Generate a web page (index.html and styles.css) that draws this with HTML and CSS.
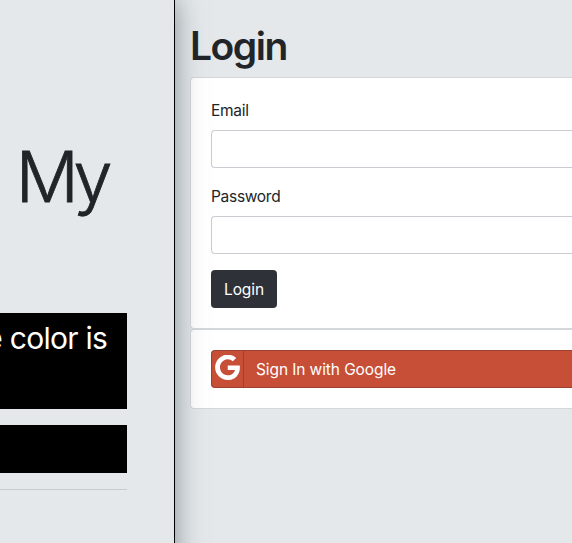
FILE: index.html
```html
<!DOCTYPE html>
<html lang="en">
<head>
<meta charset="utf-8">
<title>Login</title>
<link rel="stylesheet" href="styles.css">
</head>
<body>
<div class="page">
  <aside class="intro">
    <h1 class="display">My</h1>
    <p class="banner"><span>e color is</span></p>
    <div class="bar"></div>
    <hr class="rule">
  </aside>
  <main class="login">
    <h2 class="title">Login</h2>
    <form class="card form">
      <label class="label" for="email">Email</label>
      <input class="field" id="email" type="email">
      <label class="label" for="password">Password</label>
      <input class="field" id="password" type="password">
      <button class="submit" type="button"><span>Login</span></button>
    </form>
    <section class="card social">
      <a class="google" href="#">
        <span class="logo"><svg viewBox="0 106 1505 1518" width="25" height="25"><path fill="#fff" d="M768 750h725q12 67 12 124 0 217-91 387.500t-259.500 266.500-386.500 96q-157 0-299-60.500t-245-163.500-163.500-245-60.500-299 60.500-299 163.500-245 245-163.500 299-60.500q300 0 515 201l-209 201q-123-119-306-119-129 0-238.500 65t-173.500 176.500-64 243.500 64 243.500 173.500 176.500 238.500 65q87 0 160-24t120-60 82-82 51.500-87 22.500-78h-436v-264z"/></svg></span>
        <span class="google-text">Sign In with Google</span>
      </a>
    </section>
  </main>
</div>
</body>
</html>
```
FILE: styles.css
```css
* { box-sizing: border-box; }
body {
  margin: 0;
  background: #e4e8eb;
  color: #212529;
  font: 15.5px/24px Inter, "Liberation Sans", sans-serif;
}
.page { display: flex; height: 543px; overflow: hidden; }
.intro {
  position: relative;
  z-index: 1;
  flex: 0 0 175px;
  min-width: 0;
  margin-bottom: -40px;
  padding: 133px 47px 0 0;
  background: #e4e8eb;
  border-right: 1px solid #000;
  box-shadow: 0 0 26px rgba(40, 55, 60, .5);
}
.display {
  margin: 0 0 92px;
  padding-right: 20px;
  font-size: 70px;
  font-weight: 300;
  line-height: 88px;
  letter-spacing: -5.5px;
  text-align: right;
  -webkit-text-stroke: .8px #212529;
}
.banner {
  display: flex;
  justify-content: flex-end;
  height: 96px;
  margin: 0 0 16px;
  padding: 1px 20px 0 0;
  overflow: hidden;
  background: #000;
  color: #fff;
  font-size: 30px;
  line-height: 48px;
  letter-spacing: -.75px;
  white-space: nowrap;
}
.bar { height: 48px; background: #000; }
.rule { margin: 16px 0 0; border: 0; border-top: 1px solid #c7cbce; }
.login { flex: 1; min-width: 0; padding: 22px 0 0 15px; }
.title {
  margin: 0 0 7px;
  font-size: 39px;
  font-weight: 600;
  line-height: 48px;
  letter-spacing: -1.5px;
}
.card {
  padding: 20px 0 20px 20px;
  background: #fff;
  border: 1px solid #d4d7d9;
  border-right: 0;
  border-radius: 4px 0 0 4px;
}
.form { height: 252px; }
.label { display: block; margin-bottom: 7px; padding-top: 1px; letter-spacing: -.3px; }
.field {
  display: block;
  width: 100%;
  height: 38px;
  margin: 0 0 16px;
  background: #fff;
  border: 1px solid #c9ccd0;
  border-right: 0;
  border-radius: 4px 0 0 4px;
}
.submit {
  display: block;
  width: 66px;
  height: 38px;
  padding: 2px 0 0;
  background: #2e3238;
  border: 0;
  border-radius: 4px;
  color: #fff;
  font: inherit;
  letter-spacing: -.1px;
}
.social { height: 80px; }
.google {
  display: flex;
  height: 38px;
  overflow: hidden;
  background: #c74f38;
  border: 1px solid #9b412f;
  border-right: 0;
  border-radius: 4px 0 0 4px;
  color: #fff;
  line-height: 38px;
  letter-spacing: -.1px;
  text-decoration: none;
}
.logo {
  width: 32px;
  padding: 4px 0 0 3px;
  border-right: 1px solid #9e412e;
}
.logo svg { display: block; }
.google-text { padding-left: 12px; }
```
